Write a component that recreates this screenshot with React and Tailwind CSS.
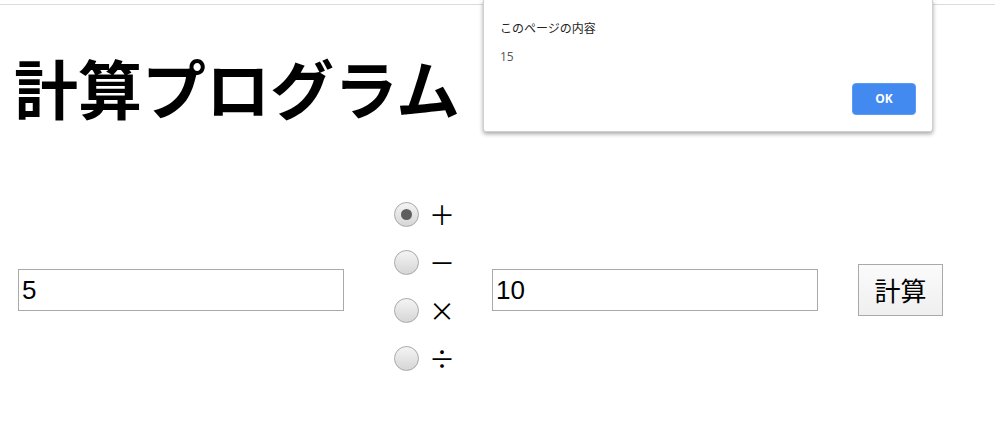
import React, { useState } from "react";

const OPS = ["＋", "－", "×", "÷"];

const Radio = ({ checked }) => (
  <span className="flex h-[25px] w-[25px] items-center justify-center rounded-full border border-[#a9a9a9] bg-gradient-to-b from-[#f4f4f4] to-[#d6d6d6]">
    {checked && <span className="h-[11px] w-[11px] rounded-full bg-[#5e5e5e]" />}
  </span>
);

export default function App() {
  const [op, setOp] = useState(0);

  return (
    <div className="relative min-h-[423px] w-full bg-white font-['Liberation_Sans','Noto_Sans_CJK_JP',sans-serif] text-black">
      {/* top bar edge */}
      <div className="h-[4px]" />
      <div className="h-px bg-[#dcdcdc]" />

      <h1 className="ml-[14px] mt-[49px] text-[64px] font-bold leading-none font-['Noto_Sans_CJK_JP',sans-serif]">
        計算プログラム
      </h1>

      <div className="mt-[72px] flex items-center pl-[18px]">
        <input
          type="text"
          defaultValue="5"
          className="h-[42px] w-[326px] border border-[#a9a9a9] px-[3px] text-[26px] outline-none"
        />

        <div className="mb-[8px] ml-[50px] flex w-[98px] flex-col">
          {OPS.map((o, i) => (
            <label
              key={o}
              className="flex h-[48px] cursor-pointer items-center"
              onClick={() => setOp(i)}
            >
              <Radio checked={op === i} />
              <span className="ml-[10px] text-[26px] leading-none font-['Noto_Sans_CJK_JP',sans-serif]">
                {o}
              </span>
            </label>
          ))}
        </div>

        <input
          type="text"
          defaultValue="10"
          className="h-[42px] w-[326px] border border-[#a9a9a9] px-[3px] text-[26px] outline-none"
        />

        <button className="ml-[40px] h-[52px] w-[85px] border border-[#a9a9a9] bg-gradient-to-b from-[#fbfbfb] to-[#efefef] text-[26px] leading-none font-['Noto_Sans_CJK_JP',sans-serif]">
          計算
        </button>
      </div>

      {/* alert dialog */}
      <div className="absolute left-[483px] top-0 h-[132px] w-[450px] rounded-b-[3px] border border-t-0 border-[#d0d0d0] bg-white shadow-[0_2px_4px_rgba(0,0,0,0.35)] font-['Noto_Sans_CJK_JP',sans-serif]">
        <div className="px-[16px] pt-[20px]">
          <div className="text-[12px] leading-[16px] text-[#222]">このページの内容</div>
          <div className="mt-[13px] font-['Open_Sans',sans-serif] text-[12px] leading-[16px] text-[#555]">15</div>
          <div className="mt-[18px] flex justify-end">
            <button className="h-[32px] w-[64px] rounded-[4px] border border-[#5b9bf7] bg-[#4289f0] font-['Open_Sans',sans-serif] text-[12px] font-bold text-white">
              OK
            </button>
          </div>
        </div>
      </div>
    </div>
  );
}
